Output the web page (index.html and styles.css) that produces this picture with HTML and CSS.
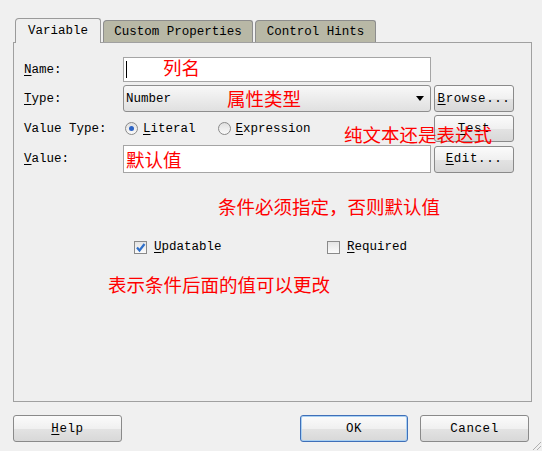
FILE: index.html
```html
<!DOCTYPE html>
<html>
<head>
<meta charset="utf-8">
<link rel="stylesheet" href="styles.css">
</head>
<body>
<div class="dialog">
  <div class="tabs">
    <div class="tab tab-active tab-var">Variable</div>
    <div class="tab tab-custom">Custom Properties</div>
    <div class="tab tab-hints">Control Hints</div>
  </div>
  <div class="panel">
    <div class="form">
      <div class="label"><u>N</u>ame:</div>
      <div class="input input-name"><span class="caret"></span></div>
      <div class="empty"></div>

      <div class="label"><u>T</u>ype:</div>
      <div class="select"><span>Number</span><span class="arrow"></span></div>
      <div class="btn"><u>B</u>rowse...</div>

      <div class="label">Value Type:</div>
      <div class="radios">
        <span class="radio-item"><span class="radio radio-on"></span><span><u>L</u>iteral</span></span>
        <span class="radio-item radio-expr"><span class="radio"></span><span><u>E</u>xpression</span></span>
      </div>
      <div class="btn"><u>T</u>est</div>

      <div class="label"><u>V</u>alue:</div>
      <div class="input input-value"></div>
      <div class="btn btn-edit"><u>E</u>dit...</div>
    </div>
    <div class="checks">
      <span class="check-item check-upd"><span class="checkbox checked"><svg width="11" height="11" viewBox="0 0 11 11"><path d="M2 5.5 L4.5 8.5 L9.5 2" fill="none" stroke="#2f6fc9" stroke-width="2.2"/></svg></span><span><u>U</u>pdatable</span></span>
      <span class="check-item"><span class="checkbox"></span><span><u>R</u>equired</span></span>
    </div>
  </div>
  <div class="footer">
    <div class="btn btn-foot"><u>H</u>elp</div>
    <div class="foot-right">
      <div class="btn btn-foot btn-default">OK</div>
      <div class="btn btn-foot">Cancel</div>
    </div>
  </div>

  <div class="note note-1">列名</div>
  <div class="note note-2">属性类型</div>
  <div class="note note-3">纯文本还是表达式</div>
  <div class="note note-4">默认值</div>
  <div class="note note-5">条件必须指定，否则默认值</div>
  <div class="note note-6">表示条件后面的值可以更改</div>

  <svg class="grip" width="12" height="12" viewBox="0 0 12 12">
    <path d="M11 3 L3 11 M11 7 L7 11" stroke="#b0b0b0" stroke-width="1"/>
  </svg>
</div>
</body>
</html>
```

FILE: styles.css
```css
* { box-sizing: border-box; }
html, body {
  margin: 0;
  padding: 0;
  background: #f0f0f0;
}
.dialog {
  position: relative;
  width: 542px;
  height: 451px;
  overflow: hidden;
  font-family: "Liberation Mono", "DejaVu Sans Mono", monospace;
  font-size: 12.5px;
  color: #000;
  background: #f0f0f0;
}
u { text-decoration: underline; text-underline-offset: 2px; }

/* tabs */
.tabs {
  display: flex;
  align-items: flex-end;
  gap: 2px;
  padding: 18px 0 0 15px;
  height: 42px;
  position: relative;
  z-index: 2;
}
.tab {
  height: 22px;
  border: 1px solid #8d8d8d;
  border-bottom: none;
  border-radius: 4px 3px 0 0;
  background: #b8b8a6;
  display: flex;
  align-items: center;
  justify-content: center;
  white-space: nowrap;
}
.tab-active {
  height: 25px;
  margin-bottom: -1px;
  background: #efefef;
  border-color: #9a9a9a;
}
.tab-var { width: 86px; }
.tab-custom { width: 150px; }
.tab-hints { width: 121px; }

/* panel */
.panel {
  margin: 0 10px 0 13px;
  height: 360px;
  border: 1px solid #a0a0a0;
  background: #efefef;
  padding: 14px 0 0 10px;
}
.form {
  display: grid;
  grid-template-columns: 96px 308px 80px;
  grid-template-rows: 25px 27px 27px 28px;
  column-gap: 3px;
  row-gap: 3px;
  align-items: center;
}
.label { white-space: nowrap; }
.input {
  height: 100%;
  background: #fff;
  border: 1px solid #a5a5a5;
  position: relative;
  display: flex;
  align-items: center;
}
.input-name { height: 25px; }
.caret {
  display: block;
  width: 1px;
  height: 17px;
  background: #000;
  margin-left: 2px;
}
.select {
  height: 100%;
  border: 1px solid #8e8e8e;
  border-radius: 3px;
  background: linear-gradient(#f8f8f8, #ececec 50%, #e0e0e0);
  display: flex;
  align-items: center;
  justify-content: space-between;
  padding: 0 6px 0 2px;
}
.arrow {
  width: 0; height: 0;
  border-left: 4px solid transparent;
  border-right: 4px solid transparent;
  border-top: 5px solid #000;
}
.btn {
  height: 100%;
  border: 1px solid #8a8a8a;
  border-radius: 3px;
  background: linear-gradient(#fbfbfb, #f0f0f0 50%, #e3e3e3 51%, #d8d8d8);
  display: flex;
  align-items: center;
  justify-content: center;
  white-space: nowrap;
  letter-spacing: 0.6px;
}
.btn-edit { height: 27px; }
.radios {
  display: flex;
  align-items: center;
  padding-left: 2px;
}
.radio-item {
  display: flex;
  align-items: center;
  gap: 5px;
}
.radio-expr { margin-left: 22px; }
.radio {
  width: 13px;
  height: 13px;
  border-radius: 50%;
  border: 1px solid #8a8a8a;
  background: linear-gradient(#e0e0e0, #fafafa);
  display: flex;
  align-items: center;
  justify-content: center;
}
.radio-on::after {
  content: "";
  width: 5px;
  height: 5px;
  border-radius: 50%;
  background: #2c63c4;
}

/* checks */
.checks {
  display: grid;
  grid-template-columns: 193px auto;
  margin-top: 67px;
  padding-left: 110px;
  align-items: center;
}
.check-item {
  display: flex;
  align-items: center;
  gap: 7px;
}
.checkbox {
  width: 13px;
  height: 13px;
  border: 1px solid #8a8a8a;
  background: linear-gradient(#e4e4e4, #fbfbfb);
  display: flex;
  align-items: center;
  justify-content: center;
}

/* footer */
.footer {
  display: flex;
  justify-content: space-between;
  padding: 13px 13px 0 13px;
}
.foot-right {
  display: flex;
  gap: 12px;
}
.btn-foot {
  width: 109px;
  height: 27px;
}
.btn-default {
  width: 108px;
  border-color: #3f6fb8;
  box-shadow: inset 0 0 0 1px #a9d0f2;
}

/* annotations */
.note {
  position: absolute;
  color: #ff0000;
  font-family: "Noto Sans CJK SC", "Noto Sans", sans-serif;
  font-size: 18.5px;
  line-height: 20px;
  white-space: nowrap;
}
.note-1 { left: 163px; top: 57px; }
.note-2 { left: 227px; top: 88px; }
.note-3 { left: 344px; top: 124px; }
.note-4 { left: 126px; top: 149px; }
.note-5 { left: 218px; top: 196px; }
.note-6 { left: 108px; top: 274px; }

.grip {
  position: absolute;
  right: 0;
  bottom: 0;
}
```
